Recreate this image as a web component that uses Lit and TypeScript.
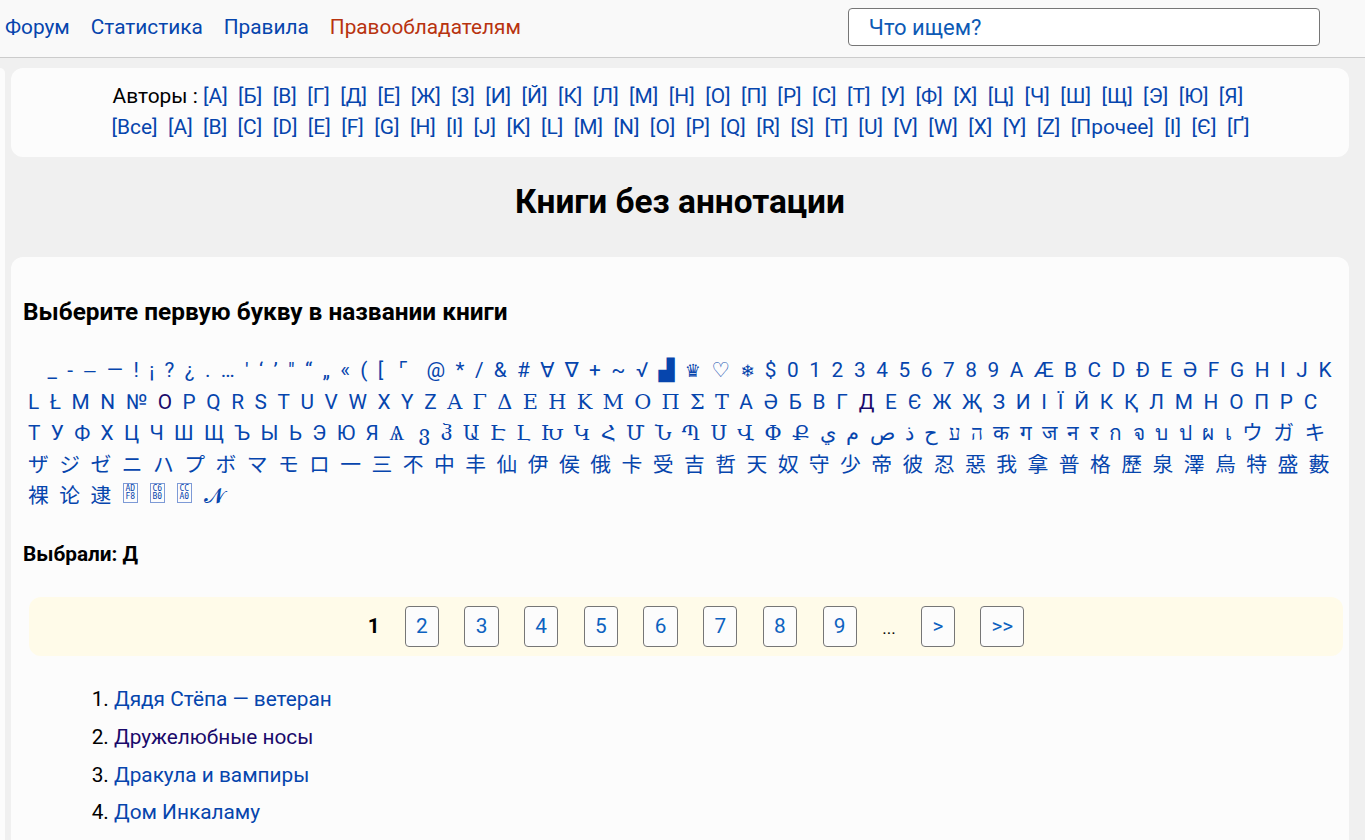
import { LitElement, html, css } from "lit";
import { customElement } from "lit/decorators.js";

const ruAuth = "А Б В Г Д Е Ж З И Й К Л М Н О П Р С Т У Ф Х Ц Ч Ш Щ Э Ю Я".split(" ");
const enAuth = "Все A B C D E F G H I J K L M N O P Q R S T U V W X Y Z Прочее І Є".split(" ");
const row1a = "_ - ‒ — ! ¡ ? ¿ . … ' ‘ ’ \" “ „ « ( [".split(" ");
const row1a2 = "@ * / & #".split(" ");
const sym = "∀ ∇".split(" ");
const row1b = "+ ~ √".split(" ");
const row1c = "$ 0 1 2 3 4 5 6 7 8 9 A Æ B C D Đ E Ə F G H I J K L Ł M N № O P Q R S T U V W X Y Z".split(" ");
const greek = "Α Γ Δ Ε Η Κ Μ Ο Π Σ Τ".split(" ");
const cyrA = "А Ә Б В Г Д Е Є Ж Җ З И І Ї Й К Қ Л М Н О П Р С".split(" ");
const cyrB = "Т У Ф Х Ц Ч Ш Щ Ъ Ы Ь Э Ю Я".split(" ");
const other1 = "ვ ჰ Ա Է Լ Խ Կ Հ Մ Ն Պ Ս Վ Փ Ք".split(" ");
const rtl = "ה ע ح ذ ص م ي".split(" ");
const other2 = "क ग ज न र ก จ บ ป ผ เ ウ ガ キ ザ ジ ゼ ニ ハ プ ボ マ モ ロ 一 三 不 中 丰 仙 伊 侯 俄 卡 受 吉 哲 天 奴 守 少 帝 彼 忍 惡 我 拿 普 格 歷 泉 澤 烏 特 盛 藪 裸 论 逮".split(" ");
const pages = ["2", "3", "4", "5", "6", "7", "8", "9"];

@customElement("app-root")
export class AppRoot extends LitElement {
  static styles = css`
    :host { display: block; font-family: Roboto, "DejaVu Serif", "Noto Sans CJK JP", serif; font-size: 20.8px; line-height: 1.5; color: #000; background: #f0f0f0; height: 840px; overflow: hidden; }
    a { color: #0645ad; text-decoration: none; }
    a.seen { color: #1a0a6b; }
    .top { display: flex; align-items: center; height: 55px; padding-bottom: 2px; background: #f9f9f9; border-bottom: 1px solid #ccc; padding-left: 5px; }
    .nav { display: flex; gap: 21px; }
    .nav .hot { color: #b8330f; }
    .search { margin: 0 0 1px 327px; width: 450px; height: 36px; border: 1px solid #767676; border-radius: 4px; background: #fff; color: #0d5ab5; padding-left: 20px; display: flex; align-items: center; font-size: 22px; }
    .body { display: flex; gap: 6px; padding-top: 10px; }
    .side { width: 5px; height: 780px; background: #fcfcfc; border-radius: 0 10px 0 0; flex: none; }
    .main { width: 1338px; flex: none; }
    .card { background: #fcfcfc; border-radius: 12px; }
    .authors { height: 89px; box-sizing: border-box; padding: 13px 0 0 1px; text-align: center; line-height: 31px; font-size: 20.9px; }
    h1 { margin: 0; font-size: 33.4px; font-weight: 700; line-height: 44px; text-align: center; padding: 23px 0 33px; }
    .content { padding: 0 12px; height: 600px; }
    h3 { margin: 0; font-size: 24.4px; font-weight: 700; line-height: 30px; padding-top: 40px; }
    .letters { margin: 28px 0 0; line-height: 31.2px; padding-left: 5px; }
    .first { margin-right: 4px; }
    .wide { letter-spacing: 0.25px; }
    .wider { letter-spacing: 0.42px; }
    .cjk { letter-spacing: 0.1px; }
    .corner { font-family: "DejaVu Sans", sans-serif; margin-left: 5px; margin-right: 8px; }
    .serif { font-family: "DejaVu Serif", serif; }
    .yus { font-family: "DejaVu Serif", serif; margin-right: 4px; }
    .dj { font-family: "DejaVu Sans", sans-serif; }
    .queen { font-family: "DejaVu Sans", sans-serif; font-size: 18px; }
    .flake { font-family: "DejaVu Sans", sans-serif; font-size: 17px; }
    .tofu { display: inline-block; box-sizing: border-box; width: 15px; height: 20px; margin-right: 1.7px; border: 1px solid #7d9ad6; font: 8px/8px "DejaVu Sans Mono", monospace; color: #0645ad; text-align: center; vertical-align: 4px; padding-top: 1px; white-space: pre-line; }
    .tofu.lead { margin-left: 1px; }
    .math { font-family: "DejaVu Serif", serif; }
    .picked { font-weight: 700; margin: 0; padding-top: 27px; line-height: 30px; }
    .pager { margin: 28px -6px 0 6px; height: 59px; padding-left: 20px; background: #fffbe9; border-radius: 12px; display: flex; justify-content: center; align-items: center; }
    .pager b { margin-right: 25px; }
    .pager a { box-sizing: border-box; height: 41px; min-width: 34.2px; padding: 0 10px; border: 1px solid #767676; border-radius: 4px; background: #fcfcfc; color: #0d62c0; display: flex; align-items: center; justify-content: center; margin-right: 25.5px; }
    .pager a:last-child { margin-right: 0; }
    .dots { width: 38.5px; flex: none; font-size: 17px; padding-top: 4px; }
    ol { margin: 24px 0 0; padding-left: 91px; line-height: 38px; }
    li { height: 37.8px; }
  `;
  render() {
    const link = (c: string, cls = "") => html`<a class=${cls} href="#">${c}</a>&nbsp; `;
    return html`
      <div class="top">
        <nav class="nav">
          <a href="#">Форум</a><a href="#">Статистика</a><a href="#">Правила</a><a class="hot" href="#">Правообладателям</a>
        </nav>
        <div class="search">Что ищем?</div>
      </div>
      <div class="body">
        <div class="side"></div>
        <div class="main">
          <section class="card authors">
            Авторы : ${ruAuth.map((c) => html`<a href="#">[${c}]</a>&nbsp; `)}<br />
            ${enAuth.map((c) => html`<a href="#">[${c}]</a>&nbsp; `)}<a href="#">[Ґ]</a>
          </section>
          <h1>Книги без аннотации</h1>
          <section class="card content">
            <h3>Выберите первую букву в названии книги</h3>
            <p class="letters">
              <a class="first" href="#">&nbsp;</a>&nbsp;
              ${row1a.map((c) => link(c))}
              ${link("⌜", "corner")}
              ${row1a2.map((c) => link(c))}
              ${sym.map((c) => link(c, "dj"))}
              ${row1b.map((c) => link(c))}
              ${link("▟", "dj")}
              ${link("♛", "queen")}
              ${link("♡", "dj")}
              ${link("❄", "flake")}
              ${row1c.map((c) => link(c, c === "O" ? "seen wide" : "wide"))}
              ${greek.map((c) => link(c, "serif"))}
              ${cyrA.map((c) => link(c, c === "Д" ? "seen wider" : "wider"))}
              ${cyrB.map((c) => link(c))}
              ${link("Ѧ", "yus")}
              ${other1.map((c) => link(c))}
              ${rtl.map((c) => link(c))}
              ${other2.map((c) => link(c, "cjk"))}
              <a class="tofu lead" href="#">AD
F8</a>&nbsp;
              <a class="tofu" href="#">C6
B0</a>&nbsp;
              <a class="tofu" href="#">CC
A0</a>&nbsp;
              <a class="math" href="#">𝓝</a>
            </p>
            <p class="picked">Выбрали: Д</p>
            <div class="pager">
              <b>1</b>
              ${pages.map((p) => html`<a href="#">${p}</a>`)}
              <span class="dots">...</span>
              <a href="#">&gt;</a><a href="#">&gt;&gt;</a>
            </div>
            <ol>
              <li><a href="#">Дядя Стёпа — ветеран</a></li>
              <li><a class="seen" href="#">Дружелюбные носы</a></li>
              <li><a href="#">Дракула и вампиры</a></li>
              <li><a href="#">Дом Инкаламу</a></li>
            </ol>
          </section>
        </div>
      </div>
    `;
  }
}
